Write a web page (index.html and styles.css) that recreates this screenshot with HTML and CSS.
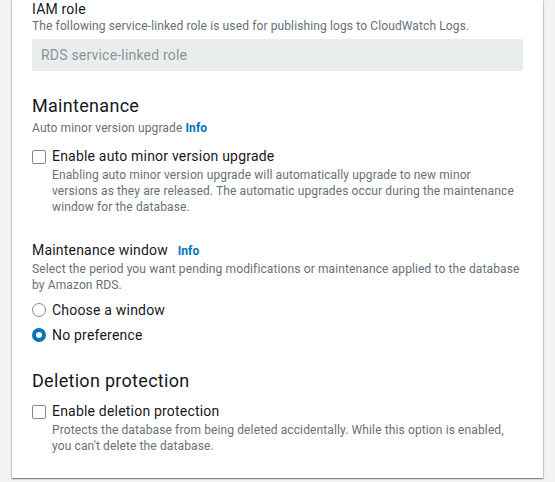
FILE: index.html
```html
<!DOCTYPE html>
<html lang="en">
<head>
<meta charset="utf-8">
<title>Additional configuration</title>
<link rel="stylesheet" href="styles.css">
</head>
<body>
<div class="page">
  <section class="card">
    <div class="field">
      <div class="label">IAM role</div>
      <div class="desc">The following service-linked role is used for publishing logs to CloudWatch Logs.</div>
      <div class="input">RDS service-linked role</div>
    </div>

    <h2 class="heading first">Maintenance</h2>
    <div class="desc">Auto minor version upgrade <a class="info">Info</a></div>
    <div class="check-row">
      <span class="checkbox"></span>
      <div class="check-body">
        <div class="check-label">Enable auto minor version upgrade</div>
        <div class="desc">Enabling auto minor version upgrade will automatically upgrade to new minor versions as they are released. The automatic upgrades occur during the maintenance window for the database.</div>
      </div>
    </div>

    <div class="field window">
      <div class="label">Maintenance window <a class="info spaced">Info</a></div>
      <div class="desc">Select the period you want pending modifications or maintenance applied to the database by Amazon RDS.</div>
      <div class="radios">
        <div class="radio-row"><span class="radio"></span><span class="radio-label">Choose a window</span></div>
        <div class="radio-row"><span class="radio checked"></span><span class="radio-label">No preference</span></div>
      </div>
    </div>

    <h2 class="heading second">Deletion protection</h2>
    <div class="check-row tight">
      <span class="checkbox"></span>
      <div class="check-body">
        <div class="check-label">Enable deletion protection</div>
        <div class="desc">Protects the database from being deleted accidentally. While this option is enabled, you can't delete the database.</div>
      </div>
    </div>
  </section>
</div>
</body>
</html>
```

FILE: styles.css
```css
html, body {
  margin: 0;
  padding: 0;
  background: #f2f3f3;
}
body {
  font-family: Roboto, "Noto Sans", sans-serif;
  color: #16191f;
  width: 555px;
  height: 482px;
  overflow: hidden;
}
.page {
  padding: 0 12px;
}
.card {
  width: 531px;
  box-sizing: border-box;
  background: #ffffff;
  padding: 0 20px 24px 20px;
  box-shadow: 0 1px 1px 0 rgba(0, 28, 36, 0.3), 1px 1px 1px 0 rgba(0, 28, 36, 0.15), -1px 1px 1px 0 rgba(0, 28, 36, 0.15);
}
.label {
  font-size: 14px;
  line-height: 18px;
  letter-spacing: 0.2px;
  color: #16191f;
}
.desc {
  font-size: 12px;
  line-height: 16px;
  letter-spacing: 0.12px;
  color: #687078;
}
.input {
  margin-top: 5px;
  height: 32px;
  box-sizing: border-box;
  background: #eaeded;
  border-radius: 2px;
  padding: 0 9px;
  font-size: 14px;
  line-height: 32px;
  letter-spacing: 0.2px;
  color: #879596;
}
.heading {
  margin: 0;
  font-size: 18px;
  line-height: 24px;
  font-weight: 400;
  letter-spacing: 0.3px;
  color: #16191f;
}
.heading.first {
  margin-top: 23px;
  margin-bottom: 2px;
}
.heading.second {
  margin-top: 24px;
}
.info {
  color: #0073bb;
  font-weight: 700;
  font-size: 12px;
  letter-spacing: 0.1px;
  text-decoration: none;
}
.info.spaced {
  margin-left: 6px;
}
.check-row {
  display: flex;
  align-items: flex-start;
  gap: 6px;
  margin-top: 10px;
}
.check-row.tight {
  margin-top: 8px;
}
.checkbox {
  flex: none;
  width: 14px;
  height: 14px;
  box-sizing: border-box;
  border: 1.5px solid #7d8998;
  border-radius: 2px;
  margin-top: 3.5px;
}
.check-body {
  flex: 1;
}
.check-label {
  font-size: 14px;
  line-height: 20px;
  letter-spacing: 0.2px;
  color: #16191f;
}
.check-body .desc {
  margin-top: 1px;
  padding-right: 5px;
}
.field.window {
  margin-top: 25px;
}
.field.window .label {
  line-height: 20px;
}
.radios {
  display: flex;
  flex-direction: column;
  gap: 5px;
  margin-top: 7px;
}
.radio-row {
  display: flex;
  align-items: center;
  gap: 6px;
  height: 20px;
}
.radio {
  flex: none;
  width: 14px;
  height: 14px;
  box-sizing: border-box;
  border: 1.5px solid #7d8998;
  border-radius: 50%;
}
.radio.checked {
  border: 4.5px solid #0073bb;
  background: #ffffff;
}
.radio-label {
  font-size: 14px;
  line-height: 20px;
  letter-spacing: 0.2px;
}
```
